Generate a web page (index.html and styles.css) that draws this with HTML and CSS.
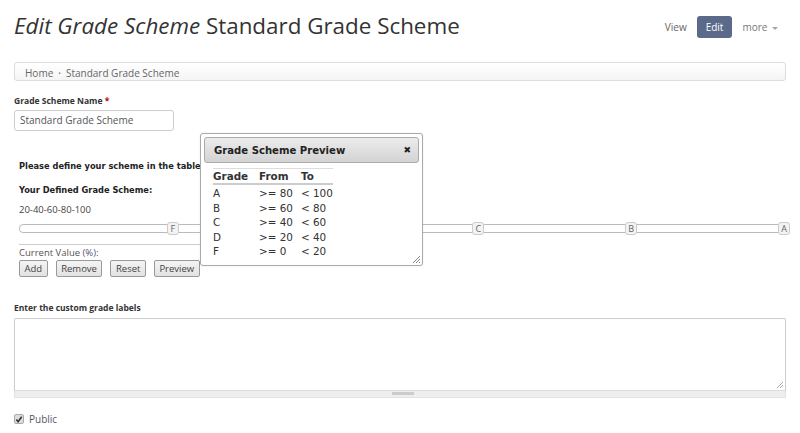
FILE: index.html
```html
<!DOCTYPE html>
<html>
<head>
<meta charset="utf-8">
<link rel="stylesheet" href="styles.css">
</head>
<body>
<div class="page">
  <header class="head">
    <h1 class="title"><em>Edit Grade Scheme</em> Standard Grade Scheme</h1>
    <nav class="tabs">
      <a class="tab">View</a>
      <a class="tab active">Edit</a>
      <a class="tab more">more <span class="caret"></span></a>
    </nav>
  </header>
  <div class="crumbs"><a>Home</a><span class="sep">•</span><a>Standard Grade Scheme</a></div>

  <label class="flabel">Grade Scheme Name <span class="req">*</span></label>
  <div class="input">Standard Grade Scheme</div>

  <div class="scheme">
    <p class="h-define">Please define your scheme in the table</p>
    <p class="h-your">Your Defined Grade Scheme:</p>
    <p class="values">20-40-60-80-100</p>
    <div class="track">
      <span class="handle" style="left:20%">F</span>
      <span class="handle" style="left:40%"></span>
      <span class="handle" style="left:60%">C</span>
      <span class="handle" style="left:80%">B</span>
      <span class="handle" style="left:100%">A</span>
    </div>
    <div class="current">
      <div class="cv">Current Value <span class="pct">(%)</span>:</div>
      <div class="btns">
        <button class="btn">Add</button>
        <button class="btn">Remove</button>
        <button class="btn">Reset</button>
        <button class="btn">Preview</button>
      </div>
    </div>

    <div class="dialog">
      <div class="dtitle"><span>Grade Scheme Preview</span><span class="close">✖</span></div>
      <table class="gtable">
        <thead><tr><th class="c1">Grade</th><th class="c2">From</th><th class="c3">To</th></tr></thead>
        <tbody>
          <tr><td>A</td><td>&gt;= 80</td><td>&lt; 100</td></tr>
          <tr><td>B</td><td>&gt;= 60</td><td>&lt; 80</td></tr>
          <tr><td>C</td><td>&gt;= 40</td><td>&lt; 60</td></tr>
          <tr><td>D</td><td>&gt;= 20</td><td>&lt; 40</td></tr>
          <tr><td>F</td><td>&gt;= 0</td><td>&lt; 20</td></tr>
        </tbody>
      </table>
      <svg class="grip" width="9" height="9" viewBox="0 0 9 9"><path d="M8 1L1 8M8 4L4 8M8 7L7 8" stroke="#888" stroke-width="1"/></svg>
    </div>
  </div>

  <label class="flabel custom">Enter the custom grade labels</label>
  <div class="textarea">
    <div class="ta"><svg class="grip2" width="8" height="8" viewBox="0 0 8 8"><path d="M7 1L1 7M7 4L4 7" stroke="#aaa" stroke-width="1"/></svg></div>
    <div class="hscroll"><span class="thumb"></span></div>
  </div>

  <div class="check"><span class="box"><svg width="9" height="9" viewBox="0 0 9 9"><path d="M1.5 4.5L3.5 7L7.5 1.5" stroke="#333" stroke-width="1.8" fill="none"/></svg></span><span class="public">Public</span></div>
</div>
</body>
</html>
```

FILE: styles.css
```css
* { box-sizing: border-box; }
body { margin: 0; background: #fff; font-family: "Open Sans", sans-serif; color: #333; }
.page { padding: 0 14px; position: relative; }

.head { display: flex; justify-content: space-between; align-items: center; height: 50px; }
.title { margin: 0; font-weight: 400; font-size: 22.4px; color: #333; }
.title em { font-style: italic; }
.tabs { display: flex; align-items: center; gap: 10px; font-size: 10px; margin-right: 8px; margin-top: 4px; }
.tab { color: #666; line-height: 22px; }
.tab.active { background: #5b6a8b; color: #fff; border-radius: 3px; padding: 0 9px; }
.tab.more { color: #777; }
.caret { display: inline-block; width: 0; height: 0; border-left: 3px solid transparent; border-right: 3px solid transparent; border-top: 3px solid #9ab; vertical-align: middle; margin-left: 2px; }

.crumbs { margin-top: 12px; height: 19px; border: 1px solid #ddd; border-radius: 3px; background: linear-gradient(#fff, #f5f5f5); font-size: 10px; color: #666; padding: 0 10px; line-height: 20px; }
.crumbs .sep { margin: 0 5px; font-size: 7px; vertical-align: 1px; color: #888; }

.flabel { display: block; font-size: 8.5px; font-weight: 700; color: #333; margin-top: 14px; line-height: 12px; }
.req { color: #c00; }
.input { margin-top: 3px; width: 160px; height: 21px; border: 1px solid #ccc; border-radius: 3px; font-size: 10px; color: #555; padding: 0 5px; line-height: 19px; }

.scheme { position: relative; padding: 0 0 0 5px; margin-top: 28px; }
.scheme p { margin: 0; }
.h-define, .h-your { font-family: "DejaVu Sans Condensed", "DejaVu Sans", sans-serif; font-stretch: condensed; font-weight: 700; font-size: 9.2px; line-height: 14px; color: #222; }
.h-your { margin-top: 10px !important; }
.values { font-size: 9.5px; color: #444; margin-top: 6px !important; line-height: 14px; }
.track { position: relative; margin-top: 7px; height: 9px; border: 1px solid #bbb; border-radius: 4px; background: #fff; width: 766px; }
.handle { position: absolute; top: -3px; width: 12px; height: 13px; margin-left: -6px; border: 1px solid #ccc; border-radius: 3px; background: #f3f3f3; font-size: 9px; line-height: 11px; text-align: center; color: #666; }
.current { width: 186px; border-top: 1px solid #ccc; margin-top: 11px; padding-top: 1px; }
.cv { font-size: 9.5px; color: #555; line-height: 13px; }
.pct { color: #557; }
.btns { display: flex; gap: 8px; margin-top: 1px; }
.btn { font-family: "Open Sans", sans-serif; font-size: 9.5px; color: #444; height: 17px; padding: 0 4.5px; border: 1px solid #999; border-radius: 2px; background: linear-gradient(#f4f4f4, #e2e2e2); line-height: 14px; }

.dialog { position: absolute; left: 186px; top: -26px; width: 223px; height: 133px; border: 1px solid #aaa; border-radius: 3px; background: #fff; padding: 3px; box-shadow: 0 0 2px rgba(0,0,0,0.1); font-family: "DejaVu Sans", sans-serif; }
.dtitle { height: 26px; border: 1px solid #aaa; border-radius: 3px; background: linear-gradient(#ececec, #d3d3d3); display: flex; justify-content: space-between; align-items: center; padding: 0 7px 0 9px; font-weight: 700; font-size: 10.1px; color: #222; }
.close { font-size: 9px; color: #222; }
.gtable { border-collapse: collapse; margin: 5px 0 0 9px; font-size: 10.4px; color: #333; }
.gtable th { text-align: left; font-weight: 700; padding: 1px 0 1px 0; border-top: 1px solid #ddd; border-bottom: 2px solid #ccc; line-height: 12px; }
.c1 { width: 46px; }
.c2 { width: 42px; }
.c3 { width: 31px; }
.gtable td { padding: 0; line-height: 14.5px; white-space: nowrap; }
.gtable tbody tr:first-child td { padding-top: 1px; }
.grip { position: absolute; right: 1px; bottom: 1px; }

.custom { margin-top: 25px; }
.textarea { margin-top: 4px; }
.ta { position: relative; height: 73px; border: 1px solid #ccc; border-bottom-color: #ddd; border-radius: 2px 2px 0 0; }
.grip2 { position: absolute; right: 1px; bottom: 1px; }
.hscroll { height: 7px; background: #eee; border: 1px solid #e2e2e2; border-top: 0; position: relative; }
.thumb { position: absolute; left: 377px; top: 1px; width: 22px; height: 3px; background: #ccc; }

.check { display: flex; align-items: center; gap: 5px; margin-top: 14px; }
.box { width: 10px; height: 10px; border: 1px solid #aaa; border-radius: 2px; background: #ddd; display: flex; align-items: center; justify-content: center; }
.public { font-size: 10px; color: #556; }
```
